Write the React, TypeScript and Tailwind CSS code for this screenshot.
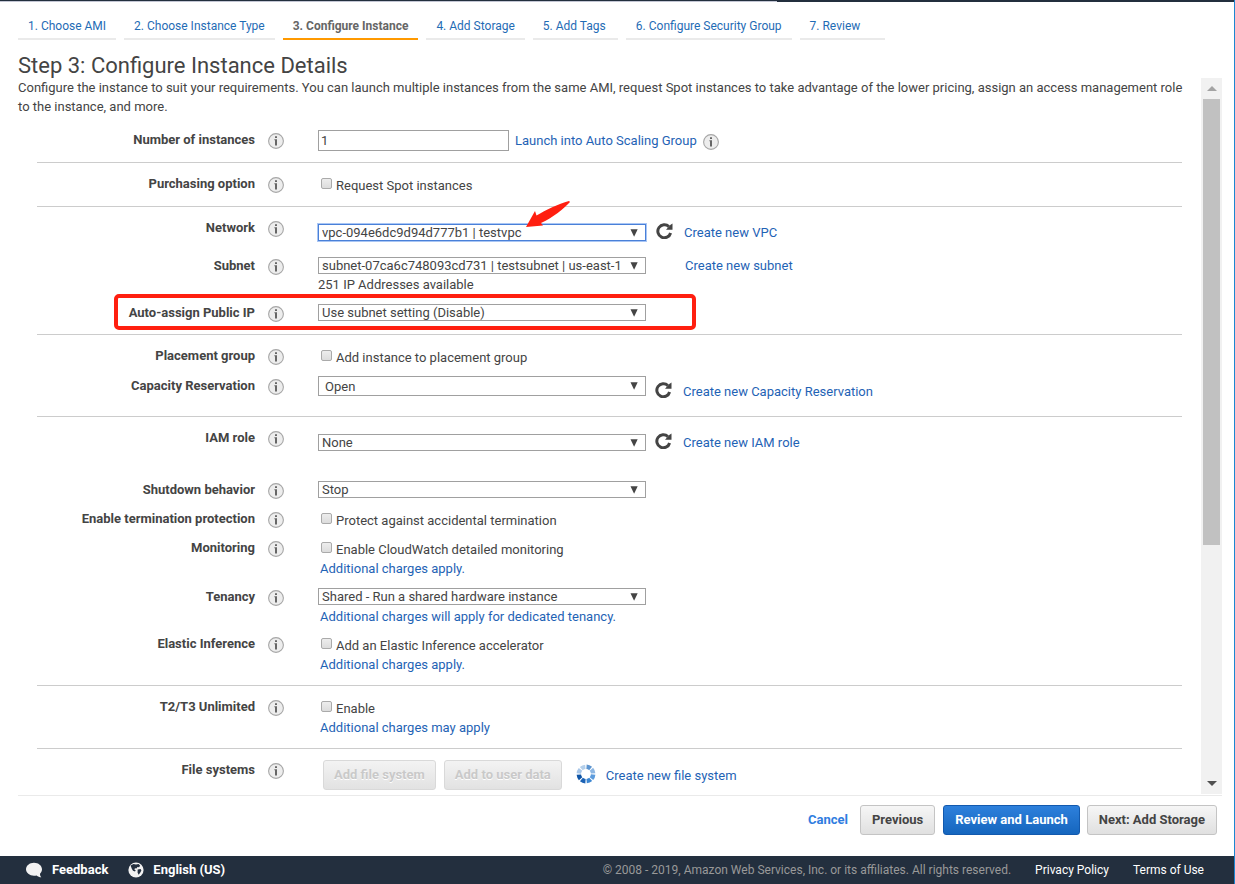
import React from "react";

const link = "text-[#1f63b5] hover:underline";

function InfoIcon({ topic }: { topic: string }) {
  return (
    <button type="button" aria-label={`About ${topic}`} className="block size-4 shrink-0 cursor-pointer">
      <svg viewBox="0 0 16 16" className="size-4">
        <circle cx="8" cy="8" r="7.4" fill="#ededed" stroke="#a6a6a6" strokeWidth="1.1" />
        <path d="M7 3.2h2v1.9H7zM6.4 6.200H9v6.200H7V7.200h-.6z" fill="#666" />
      </svg>
    </button>
  );
}

function Refresh({ topic }: { topic: string }) {
  return (
    <button type="button" aria-label={`Refresh ${topic}`} className="block h-4 w-[17px] shrink-0 cursor-pointer">
      <svg viewBox="0 0 17 16" className="h-4 w-[17px]">
        <path d="M14.600 10A6.500 6.500 0 1 1 12.900 3.600" fill="none" stroke="#444" strokeWidth="3" />
        <path d="M16.500 0.400V6.800H10L11.800 4.800L14.600 1.800Z" fill="#444" />
      </svg>
    </button>
  );
}

function Spinner() {
  const shades = ["#5d95d0", "#8db6e2", "#5c9bdc", "#3b86d2", "#1b62b5", "#0d54a6", "#a7c6e8", "#b4cfea"];
  return (
    <svg viewBox="0 0 20 20" className="size-5 shrink-0" role="img" aria-label="Loading">
      {shades.map((c, i) => (
        <path
          key={i}
          d="M7.1 1.05A9.4 9.4 0 0 1 12.9 1.05L11.5 5.3A5 5 0 0 0 8.5 5.3Z"
          fill={c}
          transform={`rotate(${22 + i * 45} 10 10)`}
        />
      ))}
    </svg>
  );
}

function Section({ children }: { children: React.ReactNode }) {
  return <section className="mx-[19px] border-b border-[#ccc] py-[11px]">{children}</section>;
}

function Row({
  id,
  label,
  height = "",
  children,
}: {
  id: string;
  label: string;
  height?: string;
  children: React.ReactNode;
}) {
  return (
    <div className={`relative flex items-start ${height}`}>
      <label htmlFor={id} className="w-[218px] shrink-0 text-right leading-5 font-bold">
        {label}
      </label>
      <div className="mr-[34px] ml-[13px] pt-[3px]">
        <InfoIcon topic={label} />
      </div>
      <div className="min-w-0 flex-1">{children}</div>
    </div>
  );
}

function Select({ id, value, variant = "normal" }: { id: string; value: string; variant?: "normal" | "focused" | "tall" }) {
  const look = {
    normal: "h-[17px] border-[#a0a0a0] pl-[3px]",
    focused: "h-[17px] border-[#4a80d8] pl-[3px] ring-1 ring-[#a9c6f5]",
    tall: "h-5 border-[#a0a0a0] pl-[6px]",
  }[variant];
  return (
    <div className="relative w-[328px] shrink-0">
      <select
        id={id}
        className={`block w-full appearance-none rounded-none border bg-white py-0 pr-[22px] leading-[15px] outline-none ${look}`}
      >
        <option>{value}</option>
      </select>
      <svg viewBox="0 0 8 8" className="pointer-events-none absolute top-1/2 right-[8px] size-2 -translate-y-1/2">
        <path d="M0.500 0.300H7.700L4.100 7.800Z" fill="#444" />
      </svg>
    </div>
  );
}

function Check({ id, text, note }: { id: string; text: string; note?: string }) {
  return (
    <div className="pt-[2px] leading-[19px]">
      <label className="flex items-start gap-1 pl-[3px]">
        <input
          id={id}
          type="checkbox"
          className="mt-[2px] size-[11px] appearance-none rounded-[2px] border border-[#aaa] bg-linear-to-b from-[#ededed] to-[#dcdcdc]"
        />
        <span>{text}</span>
      </label>
      {note && <Note>{note}</Note>}
    </div>
  );
}

function Note({ children }: { children: React.ReactNode }) {
  return (
    <a href="#pricing" className={`block w-fit pl-[2px] leading-[19px] ${link}`}>
      {children}
    </a>
  );
}

const greyButton =
  "h-[30px] rounded-[3px] border border-[#c4c4c4] bg-linear-to-b from-[#f6f6f6] to-[#e0e0e0] px-[11px] font-bold";
const disabledButton =
  "h-[30px] rounded-[3px] border border-[#d9d9d9] bg-linear-to-b from-[#f3f3f3] to-[#e2e2e2] px-[10px] font-bold text-[#c9c9c9] [text-shadow:0_1px_0_#fff]";

const steps = [
  "1. Choose AMI",
  "2. Choose Instance Type",
  "3. Configure Instance",
  "4. Add Storage",
  "5. Add Tags",
  "6. Configure Security Group",
  "7. Review",
];

export default function App() {
  return (
    <div className="flex min-h-screen flex-col border-r border-[#1c86d1] bg-white font-[Roboto,sans-serif] text-[13px] text-[#444]">
      <div className="h-px bg-[#232f3e]" />
      <div className="flex h-px">
        <div className="w-[63%] bg-[#c3c6d4]" />
        <div className="flex-1 bg-[#232f3e]" />
      </div>

      <nav className="flex gap-2 pt-3 pl-[18px]">
        {steps.map((s, i) => (
          <a
            key={s}
            href={`#step-${i + 1}`}
            aria-current={i === 2 ? "step" : undefined}
            className={`min-w-[85px] border-b-2 px-[10px] text-[12px] leading-6 ${
              i === 2 ? "border-[#f90] font-bold text-[#666]" : "border-[#eaeaea] text-[#1f6cb5]"
            }`}
          >
            {s}
          </a>
        ))}
      </nav>

      <h1 className="pt-[14px] pl-[18px] text-[22px] leading-6">Step 3: Configure Instance Details</h1>

      <div className="mr-3 ml-[18px] flex flex-1 border-b border-[#eaeaea] pb-px">
        <main className="min-w-0 flex-1">
          <p className="mb-[3px] pr-2 leading-[19px]">
            Configure the instance to suit your requirements. You can launch multiple instances from the same AMI,
            request Spot instances to take advantage of the lower pricing, assign an access management role to the
            instance, and more.
          </p>

          <Section>
            <Row id="count" label="Number of instances">
              <div className="flex items-start">
                <input
                  id="count"
                  type="text"
                  defaultValue="1"
                  className="h-[21px] w-[191px] border border-[#a0a0a0] px-[2px] outline-none"
                />
                <a href="#asg" className={`ml-[6px] leading-[21px] ${link}`}>
                  Launch into Auto Scaling Group
                </a>
                <div className="ml-[6px] pt-1">
                  <InfoIcon topic="Auto Scaling" />
                </div>
              </div>
            </Row>
          </Section>

          <Section>
            <Row id="spot" label="Purchasing option" height="min-h-[21px]">
              <Check id="spot" text="Request Spot instances" />
            </Row>
          </Section>

          <Section>
            <Row id="network" label="Network" height="min-h-[38px]">
              <div className="flex items-start pt-[6px]">
                <Select id="network" value="vpc-094e6dc9d94d777b1 | testvpc" variant="focused" />
                <div className="-mt-px ml-[10px] flex items-start gap-[11px]">
                  <Refresh topic="networks" />
                  <a href="#vpc" className={link}>
                    Create new VPC
                  </a>
                </div>
              </div>
              <svg viewBox="0 0 44 26" className="absolute top-[-17px] left-[489px] h-[26px] w-[44px]" aria-hidden="true">
                <path d="M0 26L9 10L10.5 14.5C20 9 32 3 43 0L44 1C37 8 28 16 15 22L17 24.5Z" fill="#ff1f10" />
              </svg>
            </Row>
            <Row id="subnet" label="Subnet" height="min-h-[47px]">
              <div className="flex items-start pt-px">
                <Select id="subnet" value="subnet-07ca6c748093cd731 | testsubnet | us-east-1" />
                <a href="#subnet" className={`ml-[39px] leading-[18px] ${link}`}>
                  Create new subnet
                </a>
              </div>
              <p className="leading-[19px]">251 IP Addresses available</p>
            </Row>
            <Row id="public-ip" label="Auto-assign Public IP" height="min-h-5">
              <div className="pt-px">
                <Select id="public-ip" value="Use subnet setting (Disable)" />
              </div>
              <div className="pointer-events-none absolute top-[-9px] left-[77px] h-9 w-[582px] rounded-[5px] border-4 border-[#ff1f10]" />
            </Row>
          </Section>

          <Section>
            <Row id="placement" label="Placement group" height="min-h-[30px]">
              <Check id="placement" text="Add instance to placement group" />
            </Row>
            <Row id="capacity" label="Capacity Reservation" height="min-h-[29px]">
              <div className="flex items-start">
                <Select id="capacity" value="Open" variant="tall" />
                <div className="ml-[9px] flex items-start gap-[11px] pt-[6px]">
                  <Refresh topic="capacity reservations" />
                  <a href="#capacity" className={link}>
                    Create new Capacity Reservation
                  </a>
                </div>
              </div>
            </Row>
          </Section>

          <Section>
            <Row id="iam" label="IAM role" height="min-h-[52px]">
              <div className="flex items-start pt-[6px]">
                <Select id="iam" value="None" />
                <div className="-mt-px ml-[9px] flex items-start gap-[11px]">
                  <Refresh topic="IAM roles" />
                  <a href="#iam" className={link}>
                    Create new IAM role
                  </a>
                </div>
              </div>
            </Row>
            <Row id="shutdown" label="Shutdown behavior" height="min-h-[29px]">
              <div className="pt-px">
                <Select id="shutdown" value="Stop" />
              </div>
            </Row>
            <Row id="termination" label="Enable termination protection" height="min-h-[29px]">
              <Check id="termination" text="Protect against accidental termination" />
            </Row>
            <Row id="monitoring" label="Monitoring" height="min-h-[49px]">
              <Check
                id="monitoring"
                text="Enable CloudWatch detailed monitoring"
                note="Additional charges apply."
              />
            </Row>
            <Row id="tenancy" label="Tenancy" height="min-h-[47px]">
              <div className="pt-px">
                <Select id="tenancy" value="Shared - Run a shared hardware instance" />
                <div className="pt-[2px]">
                  <Note>Additional charges will apply for dedicated tenancy.</Note>
                </div>
              </div>
            </Row>
            <Row id="elastic" label="Elastic Inference">
              <Check id="elastic" text="Add an Elastic Inference accelerator" note="Additional charges apply." />
            </Row>
          </Section>

          <Section>
            <Row id="unlimited" label="T2/T3 Unlimited">
              <Check id="unlimited" text="Enable" note="Additional charges may apply" />
            </Row>
          </Section>

          <section className="mx-[19px] pt-[11px] pb-1">
            <Row id="file-system" label="File systems">
              <div className="flex items-start pl-[5px]">
                <button id="file-system" type="button" disabled className={disabledButton}>
                  Add file system
                </button>
                <button type="button" disabled className={`ml-2 ${disabledButton}`}>
                  Add to user data
                </button>
                <div className="ml-[14px] flex gap-[10px] pt-1">
                  <Spinner />
                  <a href="#efs" className={`leading-6 ${link}`}>
                    Create new file system
                  </a>
                </div>
              </div>
            </Row>
          </section>
        </main>

        <div className="flex w-[21px] shrink-0 flex-col bg-[#f1f1f1]" aria-hidden="true">
          <div className="flex h-[21px] items-center justify-center">
            <svg viewBox="0 0 10 5" className="h-[5px] w-[10px]">
              <path d="M0 5L5 0L10 5Z" fill="#a3a3a3" />
            </svg>
          </div>
          <div className="flex-1">
            <div className="mx-[2px] h-[446px] bg-[#c1c1c1]" />
          </div>
          <div className="flex h-[21px] items-center justify-center">
            <svg viewBox="0 0 10 5" className="h-[5px] w-[10px]">
              <path d="M0 0H10L5 5Z" fill="#505050" />
            </svg>
          </div>
        </div>
      </div>

      <div className="flex items-center justify-end pt-[9px] pr-[17px] pb-[21px]">
        <a href="#cancel" className="mr-3 font-bold text-[#2f7de0]">
          Cancel
        </a>
        <button type="button" className={greyButton}>
          Previous
        </button>
        <button
          type="button"
          className="mr-[7px] ml-2 h-[30px] rounded-[3px] border border-[#1259ae] bg-linear-to-b from-[#2d80dc] to-[#1566be] px-[11px] font-bold text-white"
        >
          Review and Launch
        </button>
        <button type="button" className={greyButton}>
          Next: Add Storage
        </button>
      </div>

      <footer className="flex h-7 items-center bg-[#232f3e] pr-[30px] pl-[26px] text-white">
        <a href="#feedback" className="flex items-center gap-[10px] font-bold">
          <svg viewBox="0 0 16 16" className="size-4" aria-hidden="true">
            <path
              d="M8 .8C3.600.8 0 3.700 0 7.300c0 3.600 3.600 6.400 8 6.400.9 0 1.800-.1 2.600-.3 1.300 1.100 2.900 1.700 4.700 1.800-.9-.9-1.300-2-1.300-3.400 1.200-1.200 2-2.700 2-4.500C16 3.700 12.400.8 8 .8Z"
              fill="#f2f2f2"
            />
          </svg>
          Feedback
        </a>
        <button type="button" className="ml-5 flex items-center gap-[9px] font-bold">
          <svg viewBox="0 0 16 16" className="size-4" aria-hidden="true">
            <circle cx="8" cy="8" r="7.600" fill="#f2f2f2" />
            <path
              d="M2.600 3.600 5.500 1.900 8 2.600 10.600 2 12.200 3.700 11 5.200 9.500 5 8.400 6.400 7 6.200 6.300 7.400 7.700 8.300 7 9.400 5 8.800 3.700 6.500Z"
              fill="#232f3e"
            />
            <path d="M9.600 7.600 12.600 7 13.400 8.600 12 11 10.600 12.800 9.600 10.400Z" fill="#232f3e" />
          </svg>
          English (US)
        </button>
        <span className="ml-auto text-[12px] text-[#999]">
          © 2008 - 2019, Amazon Web Services, Inc. or its affiliates. All rights reserved.
        </span>
        <a href="#privacy" className="ml-6 text-[12px]">
          Privacy Policy
        </a>
        <a href="#terms" className="ml-6 text-[12px]">
          Terms of Use
        </a>
      </footer>
    </div>
  );
}
